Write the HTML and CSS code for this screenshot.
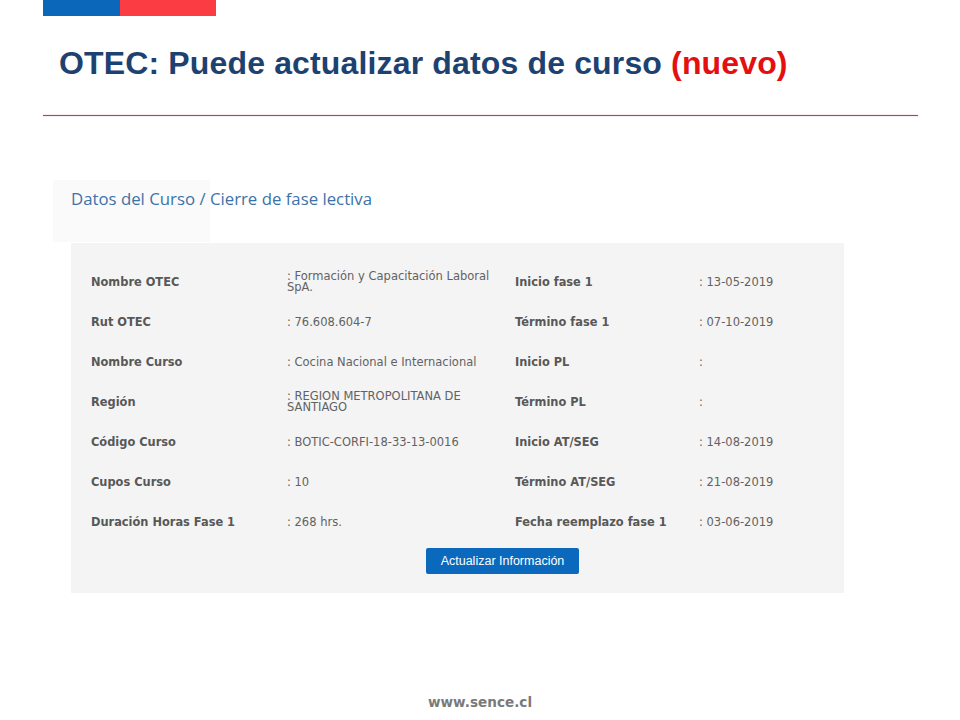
FILE: index.html
```html
<!DOCTYPE html>
<html lang="es">
<head>
<meta charset="utf-8">
<title>OTEC: Puede actualizar datos de curso (nuevo)</title>
<link rel="stylesheet" href="styles.css">
</head>
<body>
<div class="slide">
  <div class="flag"><span class="flag-blue"></span><span class="flag-red"></span></div>
  <h1 class="title">OTEC: Puede actualizar datos de curso <span class="new">(nuevo)</span></h1>
  <div class="rule"></div>

  <div class="shot">
    <div class="shot-head">
      <h2 class="shot-title">Datos del Curso / Cierre de fase lectiva</h2>
    </div>
    <div class="panel">
      <div class="grid">
        <div class="lbl">Nombre OTEC</div><div class="val">: Formación y Capacitación Laboral SpA.</div>
        <div class="lbl">Inicio fase 1</div><div class="val">: 13-05-2019</div>

        <div class="lbl">Rut OTEC</div><div class="val">: 76.608.604-7</div>
        <div class="lbl">Término fase 1</div><div class="val">: 07-10-2019</div>

        <div class="lbl">Nombre Curso</div><div class="val">: Cocina Nacional e Internacional</div>
        <div class="lbl">Inicio PL</div><div class="val">:</div>

        <div class="lbl">Región</div><div class="val">: REGION METROPOLITANA DE SANTIAGO</div>
        <div class="lbl">Término PL</div><div class="val">:</div>

        <div class="lbl">Código Curso</div><div class="val">: BOTIC-CORFI-18-33-13-0016</div>
        <div class="lbl">Inicio AT/SEG</div><div class="val">: 14-08-2019</div>

        <div class="lbl">Cupos Curso</div><div class="val">: 10</div>
        <div class="lbl">Término AT/SEG</div><div class="val">: 21-08-2019</div>

        <div class="lbl">Duración Horas Fase 1</div><div class="val">: 268 hrs.</div>
        <div class="lbl">Fecha reemplazo fase 1</div><div class="val">: 03-06-2019</div>
      </div>
      <div class="actions">
        <button class="btn" type="button">Actualizar Información</button>
      </div>
    </div>
  </div>

  <div class="footer">www.sence.cl</div>
</div>
</body>
</html>
```
FILE: styles.css
```css
html, body {
  margin: 0;
  padding: 0;
  background: #ffffff;
}

.slide {
  width: 960px;
  height: 720px;
  position: relative;
  font-family: "Liberation Sans", Arial, sans-serif;
}

.flag {
  display: flex;
  margin-left: 43px;
  height: 16px;
}

.flag-blue {
  width: 77px;
  background: #0b67b9;
}

.flag-red {
  width: 96px;
  background: #fb3c42;
}

.title {
  margin: 29px 0 0 59px;
  font-family: "Liberation Sans", Arial, sans-serif;
  font-weight: bold;
  font-size: 32px;
  line-height: 36px;
  color: #1e4270;
  letter-spacing: 0.15px;
  white-space: nowrap;
}

.new {
  color: #e3100f;
}

.rule {
  margin: 34px 0 0 43px;
  width: 875px;
  height: 1px;
  background: #dc352d;
  box-shadow: 0 -1px 0 rgba(255, 215, 215, 0.5), 0 1px 0 rgba(240, 232, 250, 0.7);
}

.shot {
  margin: 64px 0 0 53px;
  width: 791px;
}

.shot-head {
  height: 63px;
  background: linear-gradient(#fafafa, #fafafa) no-repeat 0 0 / 157px 62px;
  padding-left: 18px;
  box-sizing: border-box;
}

.shot-title {
  margin: 0;
  padding-top: 8px;
  font-family: "Open Sans", sans-serif;
  font-weight: normal;
  font-size: 16.8px;
  line-height: 22px;
  color: #3d72a8;
}

.panel {
  margin-left: 18px;
  width: 773px;
  height: 350px;
  background: #f4f4f4;
  box-sizing: border-box;
  padding: 19px 0 0 20px;
}

.grid {
  display: grid;
  grid-template-columns: 196px 228px 184px 145px;
  grid-auto-rows: 40px;
}

.lbl, .val {
  display: flex;
  align-items: center;
  font-family: "DejaVu Sans", Verdana, sans-serif;
}

.lbl {
  font-weight: bold;
  font-size: 11.4px;
  color: #585858;
}

.val {
  font-size: 11.5px;
  line-height: 11px;
  padding-right: 10px;
  color: #626262;
}

.actions {
  display: flex;
  justify-content: flex-start;
  padding: 6px 0 0 335px;
}

.btn {
  width: 153px;
  height: 26px;
  border: 0;
  border-radius: 2px;
  background: #0b69bd;
  color: #ffffff;
  font-family: "Liberation Sans", Arial, sans-serif;
  font-size: 12.5px;
  padding: 0;
}

.footer {
  position: absolute;
  left: 0;
  right: 0;
  top: 694px;
  text-align: center;
  font-family: "DejaVu Sans", Verdana, sans-serif;
  font-weight: bold;
  font-size: 13.6px;
  color: #7a7a7a;
}
```
